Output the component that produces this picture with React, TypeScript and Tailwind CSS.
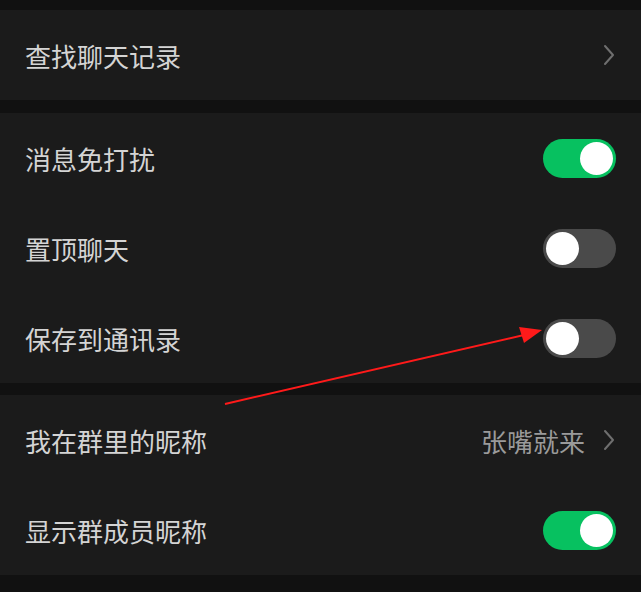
import React from "react";

function Chevron() {
    return (
        <svg width="14" height="22" viewBox="0 0 14 22" fill="none">
            <path d="M3 2l8 9-8 9" stroke="#6f6f6f" strokeWidth="2" strokeLinecap="round" strokeLinejoin="round" />
        </svg>
    );
}

function Toggle({ on }: { on: boolean }) {
    return (
        <div
            className={
                on
                    ? "w-[73px] h-[39px] rounded-full bg-[#07c160] flex items-center justify-end px-[3px]"
                    : "w-[73px] h-[39px] rounded-full bg-[#4a4a4a] flex items-center justify-start px-[3px]"
            }
        >
            <div className="w-[33px] h-[33px] rounded-full bg-white" />
        </div>
    );
}

function Row({ label, children }: { label: string; children?: React.ReactNode }) {
    return (
        <div className="h-[90px] flex items-center justify-between pl-[25px] pr-[25px]">
            <span className="text-[26px] text-[#d4d4d4]">{label}</span>
            <div className="flex items-center">{children}</div>
        </div>
    );
}

export default function App() {
    return (
        <div
            className="relative w-[641px] h-[592px] bg-[#111111] overflow-hidden pt-[10px]"
            style={{ fontFamily: '"Noto Sans CJK SC", "Noto Sans", sans-serif' }}
        >
            <div className="bg-[#1b1b1b]">
                <Row label="查找聊天记录">
                    <Chevron />
                </Row>
            </div>

            <div className="bg-[#1b1b1b] mt-[13px]">
                <Row label="消息免打扰">
                    <Toggle on />
                </Row>
                <Row label="置顶聊天">
                    <Toggle on={false} />
                </Row>
                <Row label="保存到通讯录">
                    <Toggle on={false} />
                </Row>
            </div>

            <div className="bg-[#1b1b1b] mt-[12px]">
                <Row label="我在群里的昵称">
                    <span className="text-[26px] text-[#9a9a9a] mr-[17px]">张嘴就来</span>
                    <Chevron />
                </Row>
                <Row label="显示群成员昵称">
                    <Toggle on />
                </Row>
            </div>

            <svg className="absolute left-0 top-0 pointer-events-none" width="641" height="592">
                <line x1="225" y1="404" x2="524" y2="335" stroke="#ff1a1a" strokeWidth="2" />
                <polygon points="542,330 519,327 524,343" fill="#ff1a1a" />
            </svg>
        </div>
    );
}
